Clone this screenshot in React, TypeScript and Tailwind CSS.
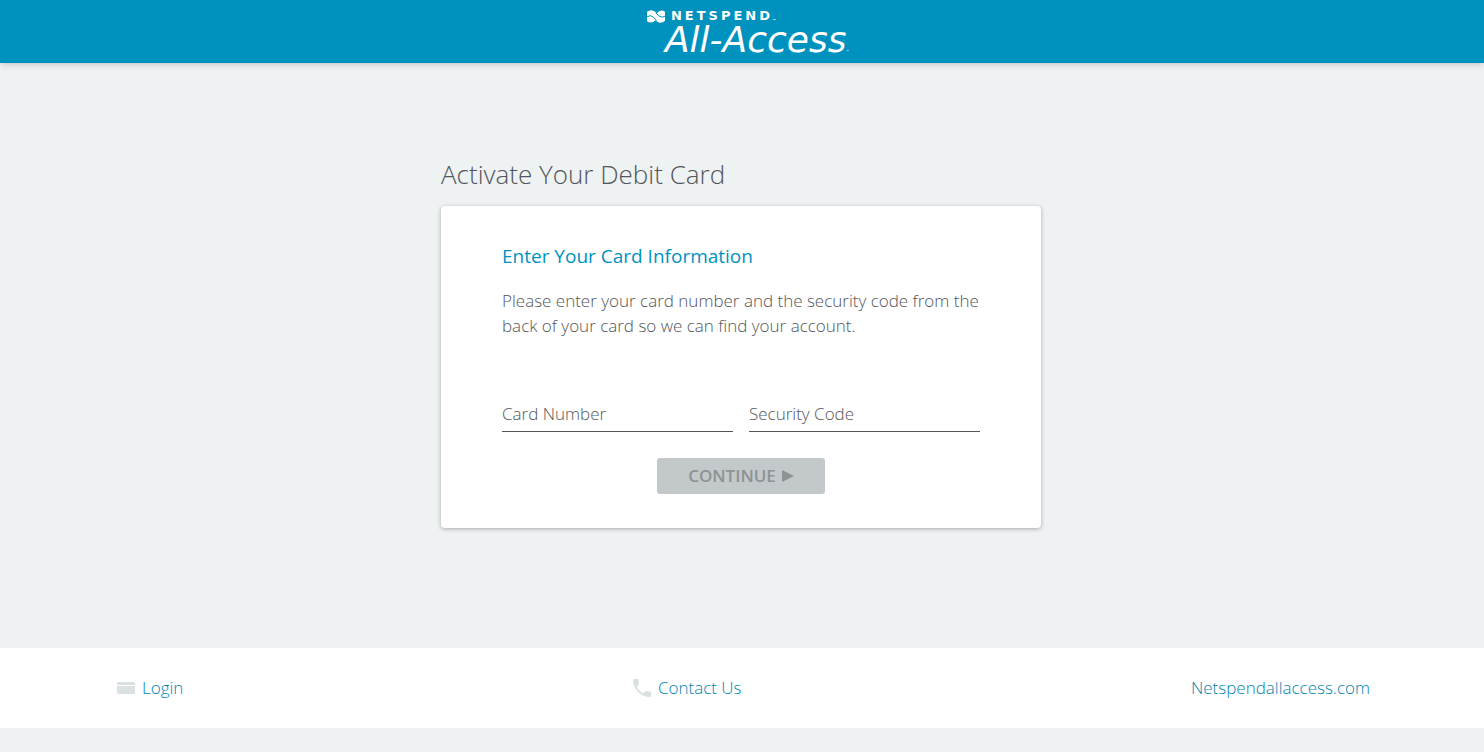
import { useState } from "react";

const fields = [
  { id: "card-number", label: "Card Number" },
  { id: "security-code", label: "Security Code" },
];

function RibbonMark() {
  return (
    <svg viewBox="0 0 54 38" className="h-[13px] w-[18px]" fill="none" aria-hidden="true">
      <path d="M0 5Q13-4 25 5L29 9Q42-4 54 5V32Q42 42 30 34L26 30Q12 42 0 33Z" fill="#fff" />
      <path d="M0 20Q10 13 18 20L29 31M26 8L37 18Q45 24 54 18" stroke="#0092bf" strokeWidth="3" />
    </svg>
  );
}

function Logo() {
  return (
    <a href="#" aria-label="Netspend All-Access" className="flex flex-col font-['DejaVu_Sans',sans-serif] text-white">
      <span className="flex h-4 items-center gap-[6px]">
        <RibbonMark />
        <span className="flex items-end text-[13px] leading-4 font-bold">
          <span className="tracking-[3px]">NETSPEND</span>
          <svg viewBox="0 0 3 1" className="mb-1 h-px w-[3px]" fill="#fff" opacity="0.6" aria-hidden="true">
            <path d="M0 0h3v1H0Z" />
          </svg>
        </span>
      </span>
      <span className="flex items-end pl-[18px]">
        <span className="text-[36px] leading-8 italic">All-Access</span>
        <span className="text-[8px] leading-[14px]">.</span>
      </span>
    </a>
  );
}

function CardIcon() {
  return (
    <svg viewBox="0 0 18 12" className="h-3 w-[18px]" fill="#dae1e2" aria-hidden="true">
      <path d="M0 3V1.5Q0 0 1.5 0h15Q18 0 18 1.5V3ZM0 4h18v6.5q0 1.5-1.5 1.5h-15Q0 12 0 10.5Z" />
    </svg>
  );
}

function PhoneIcon() {
  return (
    <svg viewBox="3 3 18 18" className="size-[18px]" fill="#dae1e2" aria-hidden="true">
      <path d="M6.62 10.79c1.44 2.83 3.76 5.14 6.59 6.59l2.2-2.2c.27-.27.67-.36 1.02-.24 1.12.37 2.33.57 3.57.57.55 0 1 .45 1 1V20c0 .55-.45 1-1 1-9.39 0-17-7.61-17-17 0-.55.45-1 1-1h3.5c.55 0 1 .45 1 1 0 1.25.2 2.45.57 3.57.11.35.03.74-.25 1.02l-2.2 2.2z" />
    </svg>
  );
}

export default function App() {
  const [values, setValues] = useState<Record<string, string>>({});
  const ready = fields.every((f) => values[f.id]);

  return (
    <div className="min-h-screen bg-[#eef2f3] font-['Open_Sans',sans-serif] text-[#53565a]">
      <header className="flex justify-center bg-[#0092bf] pt-2 pb-[7px] pl-3 shadow-md">
        <Logo />
      </header>

      <main className="mx-auto w-full max-w-[602px] pt-[95px] pr-0.5 pb-[120px]">
        <h1 className="text-[26px] leading-8 font-light">Activate Your Debit Card</h1>
        <form
          className="mt-4 rounded bg-white px-[61px] pt-9 pb-[34px] shadow-[0_1px_4px_rgba(0,0,0,0.3)]"
          onSubmit={(e) => e.preventDefault()}
        >
          <h2 className="text-[19px] leading-7 font-medium text-[#0092bf]">Enter Your Card Information</h2>
          <p className="mt-[18px] text-[17px] leading-[25px] font-light">
            Please enter your card number and the security code from the back of your card so we can find your account.
          </p>
          <div className="mt-[60px] grid grid-cols-2 gap-4 text-[17px] leading-6 font-light">
            {fields.map((f) => (
              <div key={f.id} className="relative">
                <input
                  id={f.id}
                  type="text"
                  placeholder=" "
                  value={values[f.id] ?? ""}
                  onChange={(e) => setValues((prev) => ({ ...prev, [f.id]: e.target.value }))}
                  className="peer block h-[34px] w-full border-b border-[#53565a] outline-none"
                />
                {/* sits inside the empty field, floats above it once there is a value */}
                <label
                  htmlFor={f.id}
                  className="pointer-events-none absolute -top-4 left-0 text-xs peer-placeholder-shown:top-1 peer-placeholder-shown:text-[17px] peer-placeholder-shown:leading-6"
                >
                  {f.label}
                </label>
              </div>
            ))}
          </div>
          <button
            type="submit"
            disabled={!ready}
            className="mx-auto mt-[26px] flex h-9 w-[168px] items-center justify-center gap-[6px] rounded-[3px] bg-[#c3c8ca] text-[17px] font-semibold text-[#8e9394]"
          >
            CONTINUE
            <svg viewBox="0 0 12 12" className="size-3" fill="currentColor" aria-hidden="true">
              <path d="M0 0l12 6-12 6Z" />
            </svg>
          </button>
        </form>
      </main>

      <footer className="bg-white">
        <nav className="flex h-20 items-center justify-between pr-[114px] pl-[117px] text-[17px] leading-6 font-light text-[#0085b2]">
          <a href="#" className="flex items-center gap-[7px]">
            <CardIcon />
            Login
          </a>
          <a href="#" className="flex items-center gap-[7px]">
            <PhoneIcon />
            Contact Us
          </a>
          <a href="#">Netspendallaccess.com</a>
        </nav>
      </footer>
    </div>
  );
}
